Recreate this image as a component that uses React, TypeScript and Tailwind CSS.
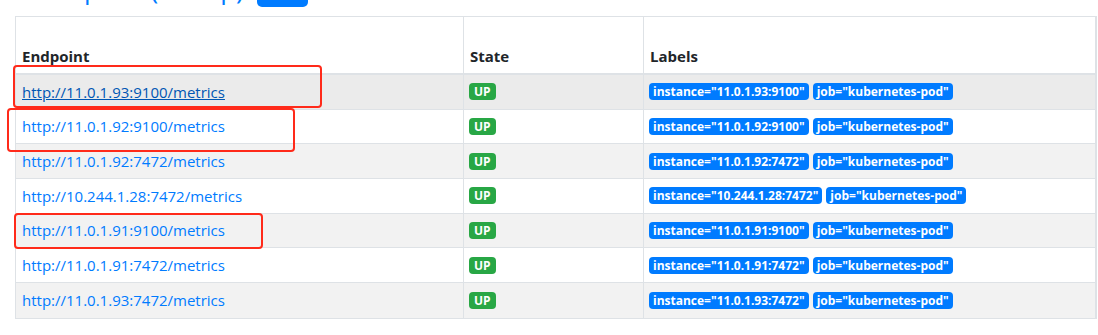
import React from 'react';

interface Target {
  endpoint: string;
  instance: string;
  hovered?: boolean;
}

const targets: Target[] = [
  { endpoint: 'http://11.0.1.93:9100/metrics', instance: '11.0.1.93:9100', hovered: true },
  { endpoint: 'http://11.0.1.92:9100/metrics', instance: '11.0.1.92:9100' },
  { endpoint: 'http://11.0.1.92:7472/metrics', instance: '11.0.1.92:7472' },
  { endpoint: 'http://10.244.1.28:7472/metrics', instance: '10.244.1.28:7472' },
  { endpoint: 'http://11.0.1.91:9100/metrics', instance: '11.0.1.91:9100' },
  { endpoint: 'http://11.0.1.91:7472/metrics', instance: '11.0.1.91:7472' },
  { endpoint: 'http://11.0.1.93:7472/metrics', instance: '11.0.1.93:7472' },
];

const font = { fontFamily: '"Open Sans", "Noto Sans", sans-serif' };

const App: React.FC = () => {
  return (
    <div className="relative w-[1098px] h-[335px] bg-white overflow-hidden text-[#212529]" style={font}>
      {/* 被截掉的标题 */}
      <div className="h-[16px] overflow-hidden">
        <div className="flex items-start gap-[13px] -ml-[62px] -mt-[26px]">
          <span className="text-[26px] leading-[31px] text-[#007bff] whitespace-nowrap">kubernetes-pods (7/7 up)</span>
          <span className="w-[51px] h-[33px] rounded-[5px] bg-[#007bff]" />
        </div>
      </div>

      {/* 表格 */}
      <div className="ml-[15px] w-[1082px] border border-[#dee2e6] border-r-2">
        <div className="grid grid-cols-[447px_180px_1fr] h-[58px] border-b-2 border-[#dee2e6] font-bold text-[15px]">
          <div className="flex items-end px-[6px] pb-[6px]">Endpoint</div>
          <div className="flex items-end px-[6px] pb-[6px] border-l border-[#dee2e6]">State</div>
          <div className="flex items-end px-[6px] pb-[6px] border-l border-[#dee2e6]">Labels</div>
        </div>
        {targets.map((t, i) => (
          <div
            key={t.endpoint}
            className={`grid grid-cols-[447px_180px_1fr] h-[34.7px] border-b border-[#dee2e6] last:border-b-0 ${
              t.hovered ? 'bg-[#ebebeb]' : i % 2 === 0 ? 'bg-[#f2f2f2]' : 'bg-white'
            }`}
          >
            <div className="flex items-center px-[6px] text-[15px]">
              <span className={t.hovered ? 'text-[#0056b3] underline' : 'text-[#007bff]'}>{t.endpoint}</span>
            </div>
            <div className="flex items-center px-[5px] border-l border-[#dee2e6]">
              <span className="bg-[#28a745] text-white font-bold text-[12px] leading-[17px] px-[5px] rounded-[4px]">UP</span>
            </div>
            <div className="flex items-center gap-[4px] px-[5px] border-l border-[#dee2e6]">
              <span className="bg-[#007bff] text-white font-bold text-[12px] leading-[17px] px-[4px] rounded-[4px]">
                instance="{t.instance}"
              </span>
              <span className="bg-[#007bff] text-white font-bold text-[12px] leading-[17px] px-[4px] rounded-[4px]">
                job="kubernetes-pod"
              </span>
            </div>
          </div>
        ))}
      </div>

      {/* 红色标注框 */}
      <div className="absolute left-[13px] top-[65px] w-[309px] h-[43px] border-2 border-[#ff2a1a] rounded-[4px]" />
      <div className="absolute left-[7px] top-[108px] w-[288px] h-[44px] border-2 border-[#ff2a1a] rounded-[4px]" />
      <div className="absolute left-[14px] top-[213px] w-[249px] h-[36px] border-2 border-[#ff2a1a] rounded-[4px]" />
    </div>
  );
};

export default App;
